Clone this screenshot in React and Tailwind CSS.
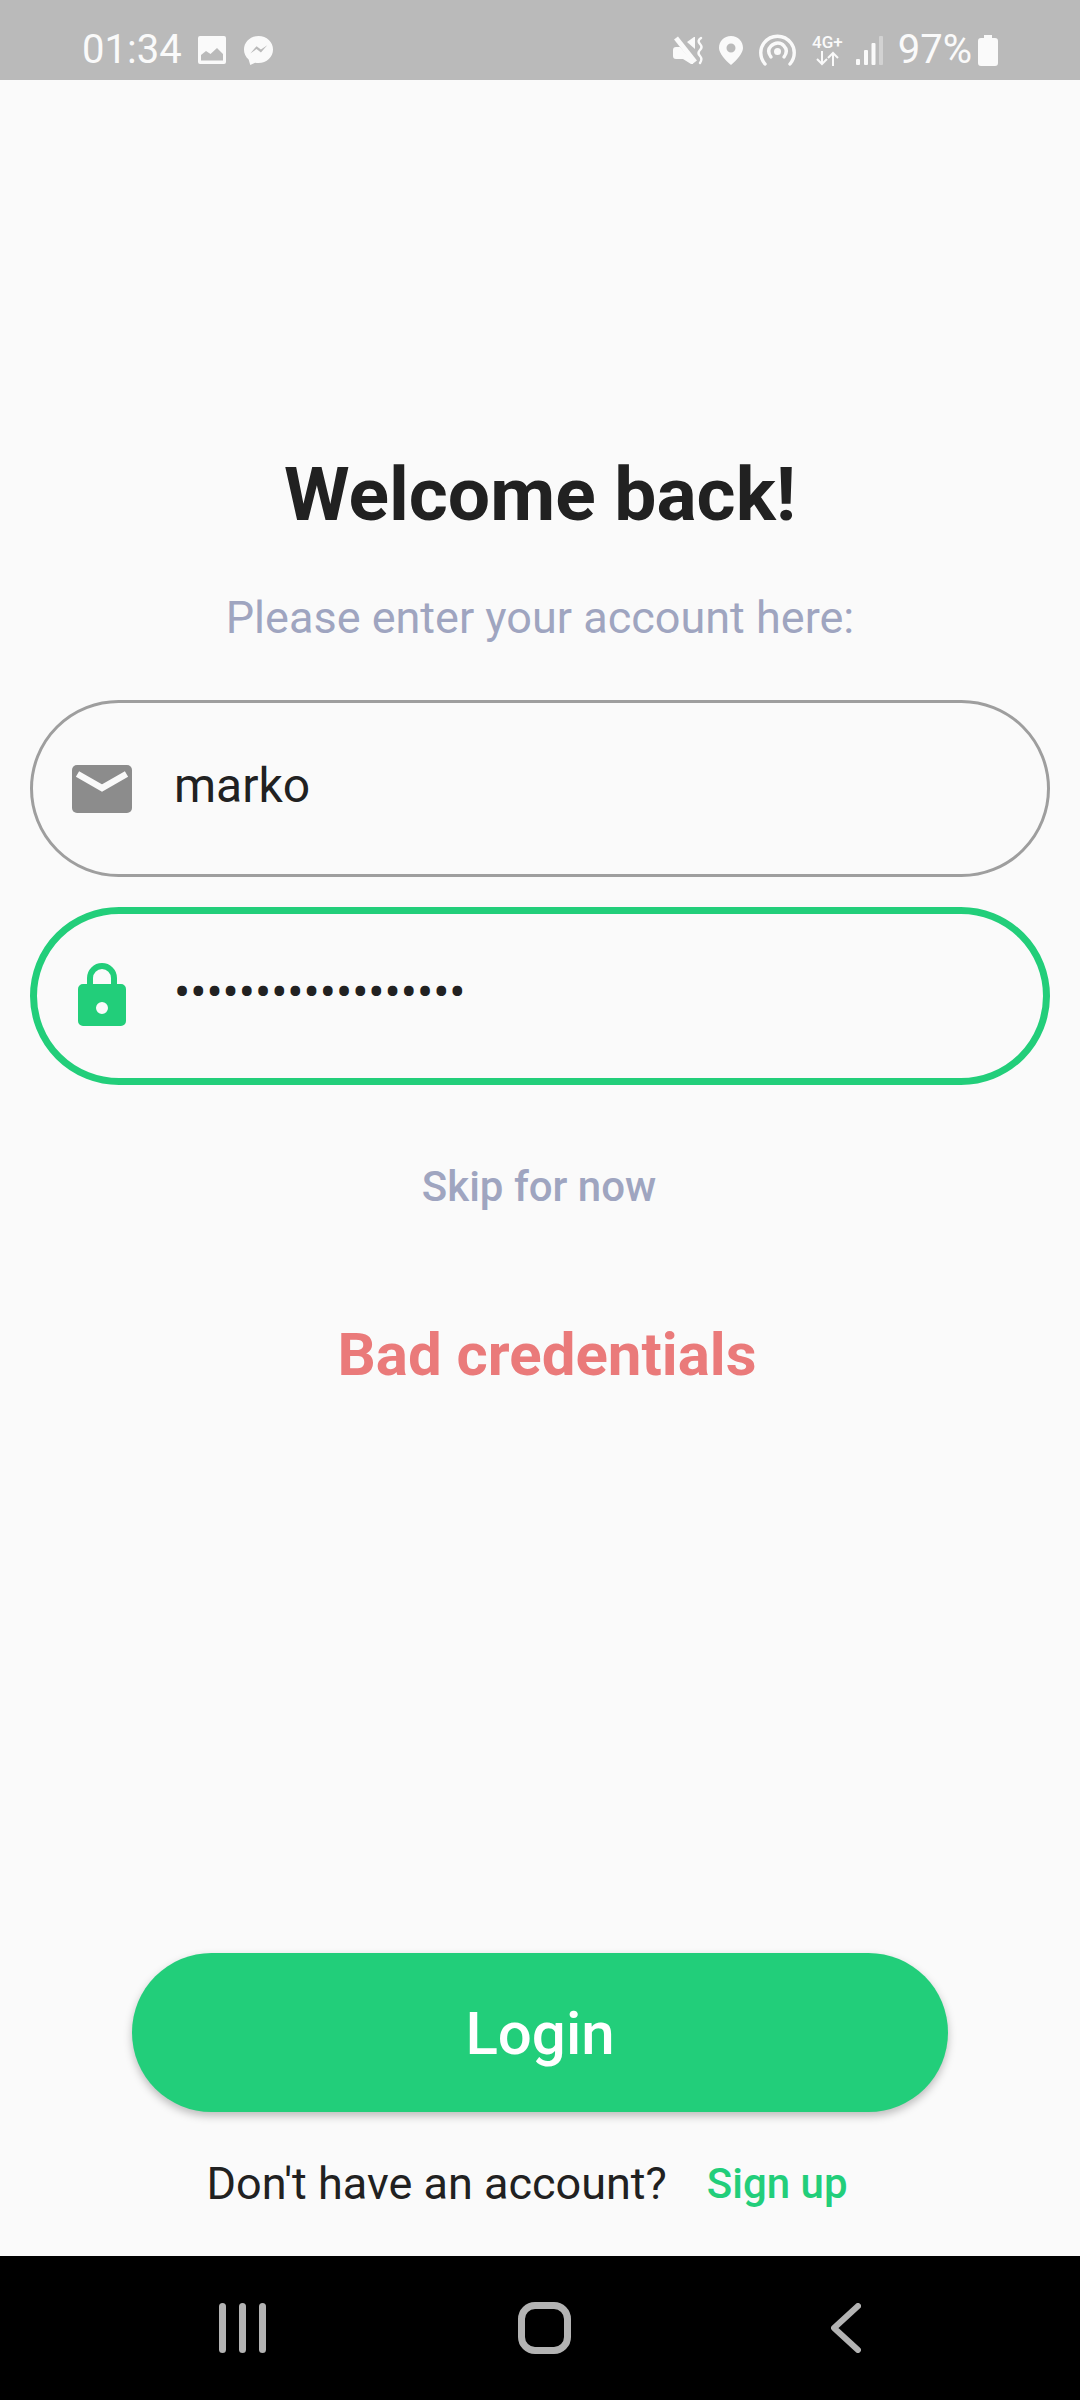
import React from 'react';

const font = { fontFamily: 'Roboto, sans-serif' };

const ImageIcon = () => (
  <svg width="28" height="28" viewBox="0 0 28 28" className="ml-[16px]">
    <path fillRule="evenodd" fill="#fafafa" d="M2 0h24a2 2 0 0 1 2 2v24a2 2 0 0 1-2 2H2a2 2 0 0 1-2-2V2a2 2 0 0 1 2-2zM3 24.500h22V18l-6-6-6.500 6-4.500-3-5 4z" />
    <circle cx="9" cy="9" r="3" fill="#fafafa" />
  </svg>
);

const MessengerIcon = () => (
  <svg width="31" height="31" viewBox="0 0 32 32" className="ml-[17px]">
    <path fill="#fafafa" d="M16 1C7.500 1 1 7.200 1 15c0 4.200 1.800 7.700 4.800 10.200l1.700 5.800 5-2.400c1.100.3 2.300.4 3.500.4 8.500 0 15-6.200 15-14S24.500 1 16 1z" />
    <path fill="#bababa" d="M7.500 19l6.500-7.500 4.500 3.500L25 10.500 18.500 18 14 14.500z" />
  </svg>
);

const MuteIcon = () => (
  <svg width="31" height="29" viewBox="0 0 31 29">
    <path fill="#fafafa" d="M14 6l7-5h1v12z" />
    <path fill="#fafafa" d="M0 14a3 3 0 0 1 3-3h4l13 15v2h-2l-8-5H3a3 3 0 0 1-3-3z" />
    <path stroke="#fafafa" strokeWidth="5" d="M3 2l19 24" />
    <path fill="none" stroke="#fafafa" strokeWidth="2.400" strokeLinecap="round" d="M28 2c-3 2-3 4-1 6 2 2 2 4 0 6-2 2-2 4 0 6 2 2 2 4 0 7" />
  </svg>
);

const PinIcon = () => (
  <svg width="24" height="29" viewBox="0 0 24 29">
    <path fillRule="evenodd" fill="#fafafa" d="M12 0c7 0 12 5 12 12 0 5-6 12-12 17C6 24 0 17 0 12 0 5 5 0 12 0zm0 7.500a4.500 4.500 0 1 0 0 9 4.500 4.500 0 0 0 0-9z" />
  </svg>
);

const HotspotIcon = () => (
  <svg width="37" height="32" viewBox="0 0 37 32">
    <g fill="none" stroke="#fafafa" strokeWidth="3.400" strokeLinecap="round">
      <path d="M6 30C0 23 1 14 5 9c7-9 20-9 27 0 4 5 5 14-1 21" />
      <path d="M12 23c-3-4-3-8 0-11 4-4 10-4 13 0 3 3 3 7 0 11" />
    </g>
    <circle cx="18.500" cy="17.500" r="3.500" fill="#fafafa" />
  </svg>
);

const ArrowsIcon = () => (
  <svg width="24" height="15" viewBox="0 0 24 15" className="block">
    <g fill="none" stroke="#fafafa" strokeWidth="2">
      <path d="M7 0v13M2 8l5 5 5-5" />
      <path d="M18 15V2M13 7l5-5 5 5" />
    </g>
  </svg>
);

const SignalIcon = () => (
  <svg width="27" height="29" viewBox="0 0 27 29">
    <rect x="0" y="23" width="4" height="6" rx="1" fill="#fafafa" />
    <rect x="8" y="14" width="4" height="15" rx="1" fill="#fafafa" />
    <rect x="15.500" y="7" width="4" height="22" rx="1" fill="#fafafa" />
    <rect x="23" y="0" width="4" height="29" rx="1" fill="#d2d2d2" />
  </svg>
);

const BatteryIcon = () => (
  <svg width="20" height="31" viewBox="0 0 20 31">
    <path fill="#fafafa" d="M6 0h8v3h3a3 3 0 0 1 3 3v22a3 3 0 0 1-3 3H3a3 3 0 0 1-3-3V6a3 3 0 0 1 3-3h3z" />
  </svg>
);

const MailIcon = () => (
  <svg width="60" height="48" viewBox="0 0 60 48" className="shrink-0">
    <rect width="60" height="48" rx="5" fill="#8c8c8c" />
    <path fill="none" stroke="#fafafa" strokeWidth="6.500" d="M5.500 9L30 23 54.500 9" />
  </svg>
);

const LockIcon = () => (
  <svg width="48" height="63" viewBox="0 0 48 63" className="shrink-0 mb-[3px]">
    <path fill="none" stroke="#22ce7a" strokeWidth="6" d="M12 24V15a12 12 0 0 1 24 0v9" />
    <path fillRule="evenodd" fill="#22ce7a" d="M5 21h38a5 5 0 0 1 5 5v32a5 5 0 0 1-5 5H5a5 5 0 0 1-5-5V26a5 5 0 0 1 5-5zm19 18a6 6 0 1 0 0 12 6 6 0 0 0 0-12z" />
  </svg>
);

const StatusBar = () => (
  <div className="h-[80px] bg-[#bababa] flex items-end justify-between pb-[14px] pl-[82px] pr-[82px] text-[#fafafa]">
    <div className="flex items-center">
      <span className="text-[40px] leading-[32px]">01:34</span>
      <ImageIcon />
      <MessengerIcon />
    </div>
    <div className="flex items-center">
      <MuteIcon />
      <span className="ml-[15px] flex"><PinIcon /></span>
      <span className="ml-[16px] flex"><HotspotIcon /></span>
      <div className="ml-[16px] flex flex-col items-center">
        <span className="text-[17px] leading-[17px] font-medium">4G+</span>
        <ArrowsIcon />
      </div>
      <span className="ml-[13px] flex"><SignalIcon /></span>
      <span className="ml-[15px] text-[40px] leading-[32px]">97%</span>
      <span className="ml-[6px] flex"><BatteryIcon /></span>
    </div>
  </div>
);

const NavBar = () => (
  <div className="h-[144px] bg-black flex items-center justify-between px-[219px] pb-[1px]">
    <div className="flex gap-[13px]">
      <div className="w-[7px] h-[50px] rounded-full bg-[#b3b3b3]" />
      <div className="w-[7px] h-[50px] rounded-full bg-[#b3b3b3]" />
      <div className="w-[7px] h-[50px] rounded-full bg-[#b3b3b3]" />
    </div>
    <div className="w-[53px] h-[52px] mr-[8px] rounded-[17px] border-[7px] border-[#b3b3b3]" />
    <svg width="30" height="50" viewBox="0 0 30 50">
      <path fill="none" stroke="#b3b3b3" strokeWidth="6" strokeLinecap="round" strokeLinejoin="round" d="M27 3L3 25l24 22" />
    </svg>
  </div>
);

export default function App() {
  return (
    <div style={font} className="w-[1080px] h-[2400px] flex flex-col bg-[#fafafa] overflow-hidden">
      <StatusBar />
      <main className="flex-1 flex flex-col items-center px-[30px]">
        <h1 className="mt-[372px] text-[75px] leading-[84px] font-bold text-[#212121]">Welcome back!</h1>
        <p className="mt-[56px] text-[45px] leading-[52px] text-[#9fa5c0]">Please enter your account here:</p>
        <div className="mt-[56px] w-full h-[177px] rounded-[89px] border-[3px] border-[#9e9e9e] flex items-center pl-[39px]">
          <MailIcon />
          <span className="ml-[42px] text-[48px] leading-[56px] text-[#212121] mb-[6px]">marko</span>
        </div>
        <div className="mt-[30px] w-full h-[178px] rounded-[89px] border-[7px] border-[#22ce7a] flex items-center pl-[41px]">
          <LockIcon />
          <span className="ml-[48px] text-[48px] leading-[56px] text-[#212121] mb-[7px]">••••••••••••••••••</span>
        </div>
        <p className="mt-[78px] mr-[2px] text-[42px] leading-[48px] font-medium text-[#9fa5c0]">Skip for now</p>
        <p className="mt-[111px] ml-[14px] text-[60px] leading-[66px] font-bold text-[#ea7a7a]">Bad credentials</p>
        <button className="mt-auto w-[816px] h-[159px] pt-[2px] rounded-[80px] bg-[#22ce7a] text-white text-[60px] font-medium shadow-[0_4px_8px_rgba(0,0,0,0.25)]">Login</button>
        <div className="mt-[44px] mb-[44px] mr-[26px] flex items-center leading-[56px]">
          <span className="text-[45px] text-[#212121]">Don't have an account?</span>
          <span className="ml-[40px] text-[42px] font-medium text-[#22ce7a]">Sign up</span>
        </div>
      </main>
      <NavBar />
    </div>
  );
}
